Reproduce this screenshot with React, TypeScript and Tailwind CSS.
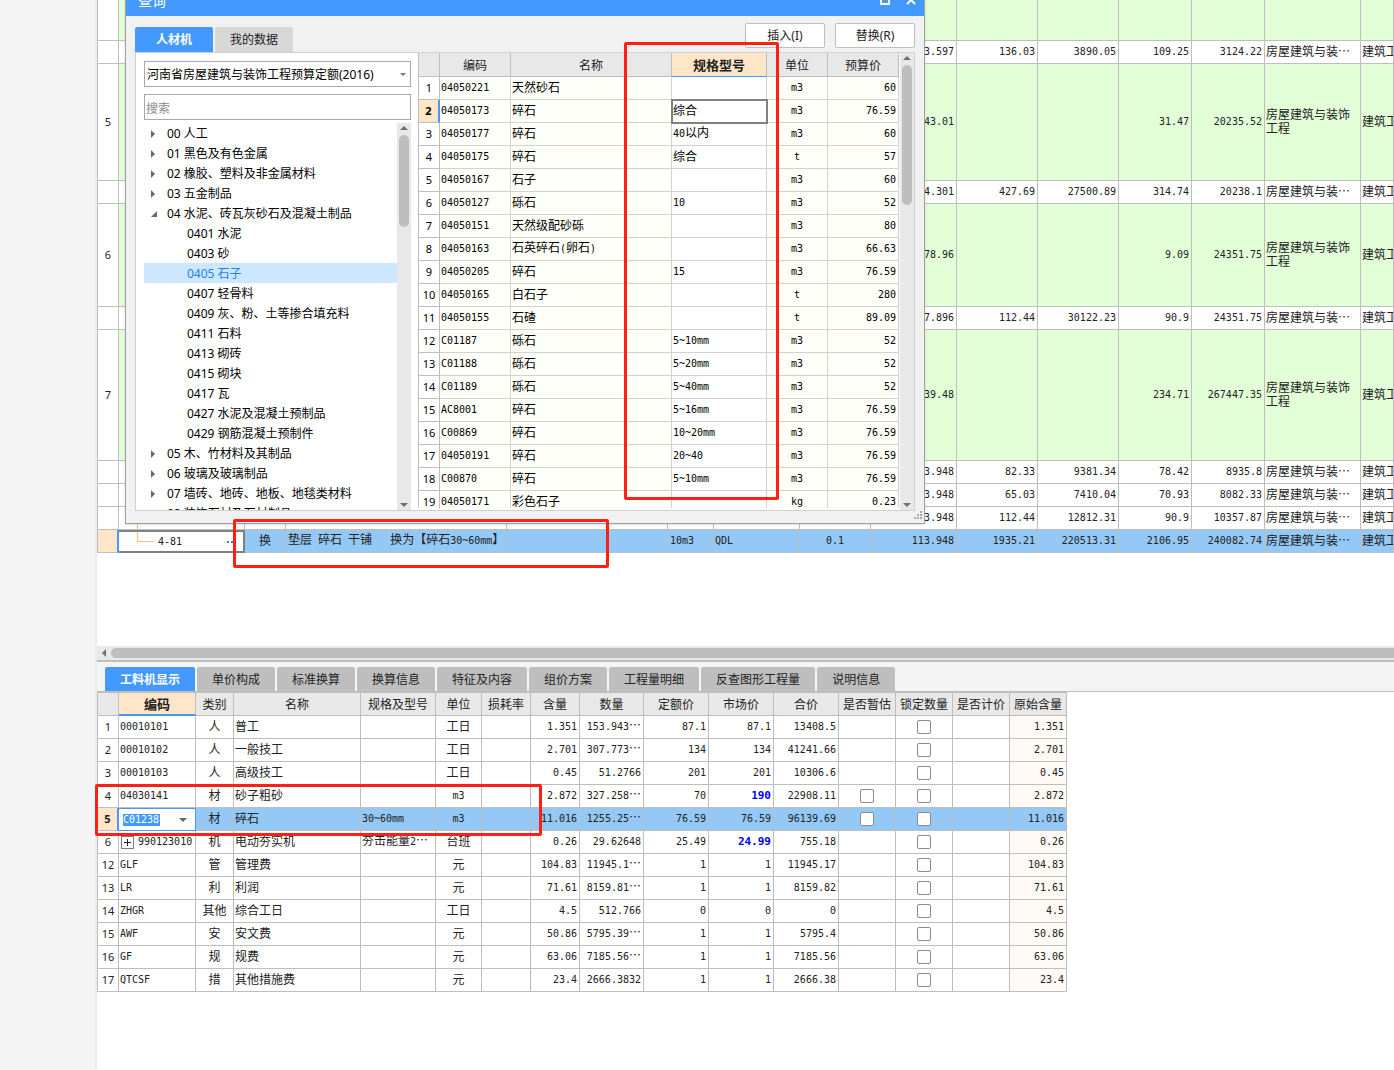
import { Fragment, type ReactNode } from "react";

const budgetRows = [
  { no: "", h: "h-[41px]", green: true, cells: ["", "", "", "", "", "", ""] },
  { no: "", h: "h-[23px]", green: false, cells: ["3.597", "136.03", "3890.05", "109.25", "3124.22", "房屋建筑与装…", "建筑工"] },
  { no: "5", h: "h-[117px]", green: true, cells: ["43.01", "", "", "31.47", "20235.52", "房屋建筑与装饰工程", "建筑工"] },
  { no: "", h: "h-[23px]", green: false, cells: ["4.301", "427.69", "27500.89", "314.74", "20238.1", "房屋建筑与装…", "建筑工"] },
  { no: "6", h: "h-[103px]", green: true, cells: ["78.96", "", "", "9.09", "24351.75", "房屋建筑与装饰工程", "建筑工"] },
  { no: "", h: "h-[23px]", green: false, cells: ["7.896", "112.44", "30122.23", "90.9", "24351.75", "房屋建筑与装…", "建筑工"] },
  { no: "7", h: "h-[131px]", green: true, cells: ["39.48", "", "", "234.71", "267447.35", "房屋建筑与装饰工程", "建筑工"] },
  { no: "", h: "h-[23px]", green: false, cells: ["3.948", "82.33", "9381.34", "78.42", "8935.8", "房屋建筑与装…", "建筑工"] },
  { no: "", h: "h-[23px]", green: false, cells: ["3.948", "65.03", "7410.04", "70.93", "8082.33", "房屋建筑与装…", "建筑工"] },
  { no: "", h: "h-[23px]", green: false, cells: ["3.948", "112.44", "12812.31", "90.9", "10357.87", "房屋建筑与装…", "建筑工"] },
];

const selectedBudget = ["113.948", "1935.21", "220513.31", "2106.95", "240082.74", "房屋建筑与装…", "建筑工"];

const tree = [
  { label: "00 人工", level: 1 },
  { label: "01 黑色及有色金属", level: 1 },
  { label: "02 橡胶、塑料及非金属材料", level: 1 },
  { label: "03 五金制品", level: 1 },
  { label: "04 水泥、砖瓦灰砂石及混凝土制品", level: 1, open: true },
  { label: "0401 水泥", level: 2 },
  { label: "0403 砂", level: 2 },
  { label: "0405 石子", level: 2, active: true },
  { label: "0407 轻骨料", level: 2 },
  { label: "0409 灰、粉、土等掺合填充料", level: 2 },
  { label: "0411 石料", level: 2 },
  { label: "0413 砌砖", level: 2 },
  { label: "0415 砌块", level: 2 },
  { label: "0417 瓦", level: 2 },
  { label: "0427 水泥及混凝土预制品", level: 2 },
  { label: "0429 钢筋混凝土预制件", level: 2 },
  { label: "05 木、竹材料及其制品", level: 1 },
  { label: "06 玻璃及玻璃制品", level: 1 },
  { label: "07 墙砖、地砖、地板、地毯类材料", level: 1 },
  { label: "08 装饰石材及石材制品", level: 1 },
];

const materials = [
  ["04050221", "天然砂石", "", "m3", "60"],
  ["04050173", "碎石", "综合", "m3", "76.59"],
  ["04050177", "碎石", "40以内", "m3", "60"],
  ["04050175", "碎石", "综合", "t", "57"],
  ["04050167", "石子", "", "m3", "60"],
  ["04050127", "砾石", "10", "m3", "52"],
  ["04050151", "天然级配砂砾", "", "m3", "80"],
  ["04050163", "石英碎石(卵石)", "", "m3", "66.63"],
  ["04050205", "碎石", "15", "m3", "76.59"],
  ["04050165", "白石子", "", "t", "280"],
  ["04050155", "石碴", "", "t", "89.09"],
  ["C01187", "砾石", "5~10mm", "m3", "52"],
  ["C01188", "砾石", "5~20mm", "m3", "52"],
  ["C01189", "砾石", "5~40mm", "m3", "52"],
  ["AC8001", "碎石", "5~16mm", "m3", "76.59"],
  ["C00869", "碎石", "10~20mm", "m3", "76.59"],
  ["04050191", "碎石", "20~40", "m3", "76.59"],
  ["C00870", "碎石", "5~10mm", "m3", "76.59"],
  ["04050171", "彩色石子", "", "kg", "0.23"],
];

const detailTabs = [
  "工料机显示",
  "单价构成",
  "标准换算",
  "换算信息",
  "特征及内容",
  "组价方案",
  "工程量明细",
  "反查图形工程量",
  "说明信息",
];

const detailHeads = [
  "类别",
  "名称",
  "规格及型号",
  "单位",
  "损耗率",
  "含量",
  "数量",
  "定额价",
  "市场价",
  "合价",
  "是否暂估",
  "锁定数量",
  "是否计价",
  "原始含量",
];

// no, code, type, name, spec, unit, content, quantity, quota price, market price, total
const details = [
  ["1", "00010101", "人", "普工", "", "工日", "1.351", "153.943…", "87.1", "87.1", "13408.5"],
  ["2", "00010102", "人", "一般技工", "", "工日", "2.701", "307.773…", "134", "134", "41241.66"],
  ["3", "00010103", "人", "高级技工", "", "工日", "0.45", "51.2766", "201", "201", "10306.6"],
  ["4", "04030141", "材", "砂子粗砂", "", "m3", "2.872", "327.258…", "70", "190", "22908.11"],
  ["5", "C01238", "材", "碎石", "30~60mm", "m3", "11.016", "1255.25…", "76.59", "76.59", "96139.69"],
  ["6", "990123010", "机", "电动夯实机", "夯击能量2…", "台班", "0.26", "29.62648", "25.49", "24.99", "755.18"],
  ["12", "GLF", "管", "管理费", "", "元", "104.83", "11945.1…", "1", "1", "11945.17"],
  ["13", "LR", "利", "利润", "", "元", "71.61", "8159.81…", "1", "1", "8159.82"],
  ["14", "ZHGR", "其他", "综合工日", "", "工日", "4.5", "512.766", "0", "0", "0"],
  ["15", "AWF", "安", "安文费", "", "元", "50.86", "5795.39…", "1", "1", "5795.4"],
  ["16", "GF", "规", "规费", "", "元", "63.06", "7185.56…", "1", "1", "7185.56"],
  ["17", "QTCSF", "措", "其他措施费", "", "元", "23.4", "2666.3832", "1", "1", "2666.38"],
];

const border = "border-r border-b border-[#bebebe]";
const softBorder = "border-r border-b border-[#d2d2d2] pb-0.5";

// Latin runs are half the width of a Chinese character
const Txt = ({ children }: { children: string }) => (
  <>
    {children.split(/([\x20-\x7e]+)/).map((part, i) =>
      i % 2 ? (
        <span key={i} className="font-['DejaVu_Sans_Mono',monospace] text-[10px]">
          {part}
        </span>
      ) : (
        <Fragment key={i}>{part}</Fragment>
      )
    )}
  </>
);

const RowNo = ({ children, active }: { children: ReactNode; active?: boolean }) => (
  <td
    className={`border-b text-center font-['Noto_Sans',sans-serif] text-[11px] ${
      active
        ? "border-r-2 border-r-[#4499ff] border-b-[#bebebe] bg-[#ffe6c8] font-bold"
        : "border-r border-[#bebebe] bg-white"
    }`}
  >
    {children}
  </td>
);

const BudgetCells = ({ cells }: { cells: string[] }) => (
  <>
    {cells.map((cell, i) => (
      <td
        key={i}
        className={`${border} overflow-hidden pb-0.5 ${
          i < 5 ? "pr-0.5 text-right whitespace-nowrap" : "pl-px text-left"
        } ${i === 6 ? "whitespace-nowrap" : ""}`}
      >
        <Txt>{cell}</Txt>
      </td>
    ))}
  </>
);

const BudgetGrid = () => (
  <table className="w-full table-fixed border-separate border-spacing-0 border-l border-[#bebebe] leading-[14px]">
    <colgroup>
      <col className="w-[21px]" />
      <col className="w-[126px]" />
      <col className="w-[41px]" />
      <col className="w-[221px]" />
      <col className="w-[161px]" />
      <col className="w-[46px]" />
      <col className="w-[86px]" />
      <col className="w-[71px]" />
      <col className="w-[86px]" />
      <col className="w-[81px]" />
      <col className="w-[81px]" />
      <col className="w-[73px]" />
      <col className="w-[73px]" />
      <col className="w-[96px]" />
      <col />
    </colgroup>
    <tbody>
      {budgetRows.map((row, r) => (
        <tr key={r} className={`${row.h} ${row.green ? "bg-[#e2ffd8]" : "bg-white"}`}>
          <RowNo>{row.no}</RowNo>
          <td className={`${border} pl-[18px]`}>
            {r === budgetRows.length - 1 && <div className="h-[22px] border-l border-l-[#ffc073]" />}
          </td>
          {[0, 1, 2, 3, 4, 5].map((c) => (
            <td key={c} className={border} />
          ))}
          <BudgetCells cells={row.cells} />
        </tr>
      ))}
      <tr className="h-[23px] bg-[#93c8f7]">
        <RowNo active>{""}</RowNo>
        <td className="border-2 border-l-0 border-[#808080] bg-white pl-[18px]">
          <div className="flex h-[19px] items-center">
            <div className="h-[10px] w-[17px] self-start border-b border-l border-b-[#ffc073] border-l-[#ffc073]" />
            <span className="ml-1 flex-1 pb-0.5">
              <Txt>4-81</Txt>
            </span>
            <span className="mr-2.5 flex gap-0.5">
              <i className="size-0.5 bg-[#2f86d6]" />
              <i className="size-0.5 bg-[#2f86d6]" />
            </span>
          </div>
        </td>
        <td className={`${border} pb-0.5 text-center`}>换</td>
        <td className={`${border} overflow-hidden pb-0.5 pl-0.5 whitespace-pre`}>
          <Txt>垫层 碎石 干铺   换为【碎石30~60mm】</Txt>
        </td>
        <td className={border} />
        <td className={`${border} pb-0.5 pl-0.5`}>
          <Txt>10m3</Txt>
        </td>
        <td className={`${border} pb-0.5 pl-px`}>
          <Txt>QDL</Txt>
        </td>
        <td className={`${border} pb-0.5 text-center`}>
          <Txt>0.1</Txt>
        </td>
        <BudgetCells cells={selectedBudget} />
      </tr>
    </tbody>
  </table>
);

const Scrollbar = ({ thumb }: { thumb: string }) => (
  <div className="flex w-3.5 flex-col items-center bg-[#e8e8e8] pt-[3px] pb-[3px]">
    <svg width="8" height="4" viewBox="0 0 8 4" className="shrink-0">
      <path d="M4 0L8 4H0Z" fill="#6e6e78" />
    </svg>
    <div className={`mt-[5px] w-2.5 rounded-full bg-[#bebebe] ${thumb}`} />
    <svg width="8" height="4" viewBox="0 0 8 4" className="mt-auto shrink-0">
      <path d="M0 0H8L4 4Z" fill="#6e6e78" />
    </svg>
  </div>
);

const CategoryPane = () => (
  <div className="flex w-[282px] flex-col pt-2 pr-[7px] pl-2">
    <div className="relative">
      <select
        aria-label="定额库"
        className="block h-[26px] w-full appearance-none border border-[#a8a8a8] bg-white pt-0.5 pl-0.5 text-black"
      >
        <option>河南省房屋建筑与装饰工程预算定额(2016)</option>
      </select>
      <svg width="6" height="3" viewBox="0 0 6 3" className="pointer-events-none absolute top-3 right-[5px]">
        <path d="M0 0H6L3 3Z" fill="#777" />
      </svg>
    </div>
    <input
      aria-label="搜索"
      placeholder="搜索"
      className="mt-[7px] h-[26px] border border-[#a8a8a8] bg-white pt-0.5 pl-px placeholder:text-[#8a8a8a]"
    />
    <div className="mt-[3px] flex h-[387px]">
      <ul className="flex-1 overflow-hidden text-black">
        {tree.map((item) => (
          <li
            key={item.label}
            className={`flex h-5 items-center pt-0.5 whitespace-nowrap ${item.level === 1 ? "pl-[7px]" : "pl-[43px]"} ${
              item.active ? "bg-[#cce7ff] text-[#1e7ff0]" : ""
            }`}
          >
            {item.level === 1 && (
              <svg width="16" height="8" viewBox="0 0 16 8" className="shrink-0">
                <path d={item.open ? "M6 1V7H0Z" : "M0 0L4 4L0 8Z"} fill="#6a6a6a" />
              </svg>
            )}
            {item.label}
          </li>
        ))}
      </ul>
      <Scrollbar thumb="h-[92px]" />
    </div>
  </div>
);

const MaterialGrid = () => (
  <div className="h-[455px] w-[481px] overflow-hidden">
    <table className="w-full table-fixed border-separate border-spacing-0 border-l border-[#bebebe] leading-[14px] text-black">
      <colgroup>
        <col className="w-[21px]" />
        <col className="w-[71px]" />
        <col className="w-[161px]" />
        <col className="w-[95px]" />
        <col className="w-[61px]" />
        <col className="w-[71px]" />
      </colgroup>
      <thead>
        <tr className="h-6 bg-[#e8e8e8] text-[#222]">
          <th className={border} />
          <th className={`${border} font-normal`}>编码</th>
          <th className={`${border} font-normal`}>名称</th>
          <th className="border-r border-b border-r-[#bebebe] border-b-[#4499ff] bg-[#ffe6c8] text-[13px] font-bold">
            规格型号
          </th>
          <th className={`${border} font-normal`}>单位</th>
          <th className={`${border} font-normal`}>预算价</th>
        </tr>
      </thead>
      <tbody>
        {materials.map(([code, name, spec, unit, price], i) => (
          <tr key={code} className="h-[23px] bg-[#fffffa]">
            <RowNo active={i === 1}>{i + 1}</RowNo>
            <td className={`${softBorder} pl-px`}>
              <Txt>{code}</Txt>
            </td>
            <td className={`${softBorder} pl-px`}>
              <Txt>{name}</Txt>
            </td>
            <td
              className={`${softBorder} bg-white pl-px ${
                i === 1 ? "outline-2 -outline-offset-1 outline-[#808080]" : ""
              }`}
            >
              <Txt>{spec}</Txt>
            </td>
            <td className={`${softBorder} text-center`}>
              <Txt>{unit}</Txt>
            </td>
            <td className={`${softBorder} pr-0.5 text-right`}>
              <Txt>{price}</Txt>
            </td>
          </tr>
        ))}
      </tbody>
    </table>
  </div>
);

const QueryDialog = () => (
  <section
    aria-label="查询"
    className="absolute -top-3.5 left-7 w-[800px] border-r border-b border-l border-[#a0a0a0] bg-[#f1f1f1] font-['Noto_Sans','Noto_Sans_CJK_SC',sans-serif] shadow-sm"
  >
    <header className="flex h-[30px] items-center justify-between bg-[#4499ff] pr-2 pl-3 text-white">
      <h2 className="text-sm">查询</h2>
      <div className="flex gap-4 pb-0.5">
        <button type="button" aria-label="最大化">
          <svg width="10" height="10" viewBox="0 0 10 10" fill="none" stroke="#fff" strokeWidth="2">
            <path d="M1 1H9V9H1Z" />
          </svg>
        </button>
        <button type="button" aria-label="关闭">
          <svg width="10" height="10" viewBox="0 0 10 10" fill="none" stroke="#fff" strokeWidth="2">
            <path d="M1 1L9 9M9 1L1 9" />
          </svg>
        </button>
      </div>
    </header>
    <div className="flex h-9 items-end justify-between px-[9px]">
      <div className="flex gap-0.5">
        <button type="button" className="h-[25px] w-[78px] rounded-t-xs bg-[#4499ff] font-bold text-white">
          人材机
        </button>
        <button type="button" className="h-[25px] w-[78px] rounded-t-xs bg-[#d8d8d8] text-[#222]">
          我的数据
        </button>
      </div>
      <div className="mb-1 flex gap-2.5 text-[#222]">
        <button type="button" className="h-[25px] w-20 rounded-xs border border-[#bebebe] bg-white">
          插入(I)
        </button>
        <button type="button" className="h-[25px] w-20 rounded-xs border border-[#bebebe] bg-white">
          替换(R)
        </button>
      </div>
    </div>
    <div className="mx-[9px] mb-3 flex h-[459px] overflow-hidden border border-[#d0d0d0] bg-white">
      <CategoryPane />
      <div className="flex flex-1 justify-between font-['Noto_Sans_CJK_SC',sans-serif]">
        <MaterialGrid />
        <Scrollbar thumb="h-[140px]" />
      </div>
    </div>
    <svg width="8" height="8" viewBox="0 0 8 8" className="absolute right-0.5 bottom-1" fill="#a8a8a8">
      <path d="M6 0h2v2h-2zM3 3h2v2h-2zM6 3h2v2h-2zM0 6h2v2h-2zM3 6h2v2h-2zM6 6h2v2h-2z" />
    </svg>
  </section>
);

const Check = ({ label }: { label: string }) => (
  <input
    type="checkbox"
    aria-label={label}
    className="mx-auto block size-3.5 appearance-none rounded-xs border border-[#8c8c8c] bg-white"
  />
);

const DetailGrid = () => (
  <table className="w-[970px] table-fixed border-separate border-spacing-0 border-l border-[#bebebe] leading-[14px]">
    <colgroup>
      <col className="w-[21px]" />
      <col className="w-[77px]" />
      <col className="w-[38px]" />
      <col className="w-[127px]" />
      <col className="w-[75px]" />
      <col className="w-[46px]" />
      <col className="w-[49px]" />
      <col className="w-[49px]" />
      <col className="w-[64px]" />
      <col className="w-[65px]" />
      <col className="w-[65px]" />
      <col className="w-[65px]" />
      <col className="w-[57px]" />
      <col className="w-[57px]" />
      <col className="w-[57px]" />
      <col className="w-[57px]" />
    </colgroup>
    <thead>
      <tr className="h-6 bg-[#e8e8e8]">
        <th className={`${border} border-t`} />
        <th className="border-t border-r border-b-2 border-[#bebebe] border-b-[#4499ff] bg-[#ffe6c8] text-[13px] font-bold">
          编码
        </th>
        {detailHeads.map((head) => (
          <th key={head} className={`${border} border-t font-normal whitespace-nowrap`}>
            {head}
          </th>
        ))}
      </tr>
    </thead>
    <tbody>
      {details.map(([no, code, type, name, spec, unit, ...nums]) => {
        const active = no === "5";
        const changed = no === "4" || no === "6";

        return (
          <tr key={no} className={`h-[23px] ${active ? "bg-[#93c8f7]" : "bg-white"}`}>
            <RowNo active={active}>{no}</RowNo>
            {active ? (
              <td className="border border-l-0 border-[#4499ff] bg-white">
                <div className="flex items-center justify-between pr-2 pl-1">
                  <input
                    aria-label="编码"
                    defaultValue={code}
                    className="h-3 w-[37px] bg-[#4499ff] font-['DejaVu_Sans_Mono',monospace] text-[10px] text-white"
                  />
                  <button type="button" aria-label="选择编码">
                    <svg width="8" height="4" viewBox="0 0 8 4">
                      <path d="M0 0H8L4 4Z" fill="#666" />
                    </svg>
                  </button>
                </div>
              </td>
            ) : (
              <td className={`${border} pl-px`}>
                <div className="flex items-center">
                  {no === "6" && (
                    <button type="button" aria-label="展开" className="mr-1 ml-px border border-[#808080]">
                      <svg width="11" height="11" viewBox="0 0 11 11" stroke="#222">
                        <path d="M2 5.5H9M5.5 2V9" />
                      </svg>
                    </button>
                  )}
                  <Txt>{code}</Txt>
                </div>
              </td>
            )}
            <td className={`${border} pb-0.5 text-center`}>{type}</td>
            <td className={`${border} pb-0.5 pl-px`}>{name}</td>
            <td className={`${border} pb-0.5 pl-px whitespace-nowrap`}>
              <Txt>{spec}</Txt>
            </td>
            <td className={`${border} pb-0.5 text-center`}>
              <Txt>{unit}</Txt>
            </td>
            <td className={border} />
            {nums.map((num, i) => (
              <td key={i} className={`${border} pr-0.5 pb-0.5 text-right whitespace-nowrap`}>
                {changed && i === 3 ? (
                  <b className="font-['DejaVu_Sans_Mono',monospace] text-[11px] text-[#0000f0]">{num}</b>
                ) : (
                  <Txt>{num}</Txt>
                )}
              </td>
            ))}
            <td className={border}>{(no === "4" || active) && <Check label={`是否暂估 ${no}`} />}</td>
            <td className={border}>
              <Check label={`锁定数量 ${no}`} />
            </td>
            <td className={border} />
            <td className={`${border} pr-0.5 pb-0.5 text-right ${active ? "" : "bg-[#fffaf5]"}`}>
              <Txt>{nums[0]}</Txt>
            </td>
          </tr>
        );
      })}
    </tbody>
  </table>
);

const App = () => {
  return (
    <div
      lang="zh-CN"
      className="flex min-h-screen overflow-hidden bg-white font-['Noto_Sans_CJK_SC',sans-serif] text-xs text-[#222]"
    >
      <aside className="w-[97px] shrink-0 border-r-2 border-[#ececec] bg-[#f4f4f4]" />
      <main className="relative min-w-0 flex-1">
        <div className="pb-[93px]">
          <BudgetGrid />
        </div>

        <div className="flex h-4 items-center border-b-2 border-[#bebebe] bg-[#e8e8e8] pl-[5px]">
          <svg width="4" height="8" viewBox="0 0 4 8">
            <path d="M4 0V8L0 4Z" fill="#6e6e78" />
          </svg>
          <div className="ml-[5px] h-2.5 flex-1 rounded-l-full bg-[#bebebe]" />
        </div>

        <div className="flex gap-0.5 border-b border-[#bebebe] bg-[#f4f4f4] px-2 pt-[5px]">
          {detailTabs.map((tab, i) => (
            <button
              key={tab}
              type="button"
              className={`h-6 rounded-t-xs px-[15px] whitespace-nowrap ${
                i === 0 ? "bg-[#4499ff] font-bold text-white" : "bg-[#bebebe]"
              }`}
            >
              {tab}
            </button>
          ))}
        </div>
        <DetailGrid />

        <QueryDialog />

        {/* highlight frames */}
        <div className="pointer-events-none absolute top-[42px] left-[527px] h-[458px] w-[155px] rounded-xs border-3 border-[#ff2014]" />
        <div className="pointer-events-none absolute top-[519px] left-[136px] h-[49px] w-[376px] rounded-xs border-3 border-[#ff2014]" />
        <div className="pointer-events-none absolute top-[784px] -left-0.5 h-[52px] w-[447px] rounded-xs border-3 border-[#ff2014]" />
      </main>
    </div>
  );
};

export default App;
